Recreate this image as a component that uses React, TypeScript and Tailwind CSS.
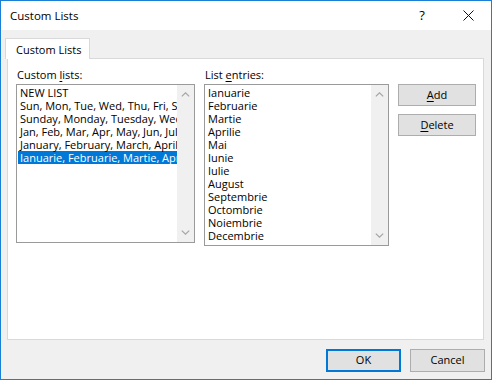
import React from 'react'

const customLists = [
  'NEW LIST',
  'Sun, Mon, Tue, Wed, Thu, Fri, Sat',
  'Sunday, Monday, Tuesday, Wednesday, Thursday, Friday, Saturday',
  'Jan, Feb, Mar, Apr, May, Jun, Jul, Aug, Sep, Oct, Nov, Dec',
  'January, February, March, April, May, June, July, August',
  'Ianuarie, Februarie, Martie, Aprilie, Mai, Iunie, Iulie',
]

const entries = [
  'Ianuarie', 'Februarie', 'Martie', 'Aprilie', 'Mai', 'Iunie',
  'Iulie', 'August', 'Septembrie', 'Octombrie', 'Noiembrie', 'Decembrie',
]

function Chevron({ up }: { up?: boolean }) {
  return (
    <svg width="9" height="5" viewBox="0 0 9 5" fill="none">
      <path d={up ? 'M0.8 4.4 L4.5 0.8 L8.2 4.4' : 'M0.8 0.6 L4.5 4.2 L8.2 0.6'} stroke="#a6a6a6" strokeWidth="1.2" />
    </svg>
  )
}

function ListBox({ items, selected, height }: { items: string[]; selected?: number; height: string }) {
  return (
    <div className={`flex border border-[#9a9a9a] bg-white ${height}`}>
      <div className="flex-1 min-w-0 overflow-hidden pt-[1px]">
        {items.map((t, i) => (
          <div
            key={t}
            className={
              i === selected
                ? 'h-[13px] leading-[13px] whitespace-nowrap ml-[1px] pl-[2px] bg-[#0078d7] text-white'
                : 'h-[13px] leading-[13px] whitespace-nowrap pl-[3px]'
            }
          >
            {t}
          </div>
        ))}
      </div>
      <div className="w-[17px] shrink-0 bg-[#f0f0f0] flex flex-col justify-between items-center pt-[7px] pb-[7px]">
        <Chevron up />
        <Chevron />
      </div>
    </div>
  )
}

function Button({ children, primary, className = '' }: { children: React.ReactNode; primary?: boolean; className?: string }) {
  return (
    <div
      className={`flex items-center justify-center bg-[#e1e1e1] ${primary ? 'border-2 border-[#0078d7]' : 'border border-[#adadad]'} ${className}`}
    >
      {children}
    </div>
  )
}

export default function App() {
  return (
    <div className="w-[492px] h-[380px] border border-[#1a80d6] bg-[#f0f0f0] flex flex-col text-black text-[11px] font-['Open_Sans',sans-serif] overflow-hidden">
      <div className="h-[29px] shrink-0 bg-white flex items-center pl-[9px]">
        <span className="text-[11.5px] leading-none">Custom Lists</span>
        <div className="ml-auto flex items-center h-full">
          <div className="w-[46px] flex justify-center text-[13px] leading-none">?</div>
          <div className="w-[46px] flex justify-center">
            <svg width="11" height="11" viewBox="0 0 11 11">
              <path d="M0.5 0.5 L10.5 10.5 M10.5 0.5 L0.5 10.5" stroke="#111" strokeWidth="1" />
            </svg>
          </div>
        </div>
      </div>

      <div className="flex-1 flex flex-col pt-[8px]">
        <div className="flex pl-[4px]">
          <div className="relative z-10 w-[85px] h-[21px] -mb-px bg-white border border-b-0 border-[#d9d9d9] pl-[10px] pt-[1px] leading-[19px]">
            Custom Lists
          </div>
        </div>

        <div className="ml-[6px] w-[477px] h-[282px] bg-white border border-[#d9d9d9] pl-[8px] pt-[8px] flex gap-[9px]">
          <div className="w-[179px]">
            <div className="h-[17px] pl-[1px] leading-[16px]">
              Custom <u className="underline-offset-2">l</u>ists:
            </div>
            <ListBox items={customLists} selected={5} height="h-[159px]" />
          </div>
          <div className="w-[185px]">
            <div className="h-[17px] pl-[1px] leading-[16px]">
              List <u className="underline-offset-2">e</u>ntries:
            </div>
            <ListBox items={entries} height="h-[162px]" />
          </div>
          <div className="w-[78px] pt-[17px]">
            <Button className="h-[22px]">
              <span><u className="underline-offset-2">A</u>dd</span>
            </Button>
            <Button className="h-[22px] mt-[8px]">
              <span><u className="underline-offset-2">D</u>elete</span>
            </Button>
          </div>
        </div>

        <div className="flex justify-end gap-[9px] pt-[9px] pr-[6px]">
          <Button primary className="w-[75px] h-[23px]">OK</Button>
          <Button className="w-[75px] h-[23px]">Cancel</Button>
        </div>
      </div>
    </div>
  )
}
